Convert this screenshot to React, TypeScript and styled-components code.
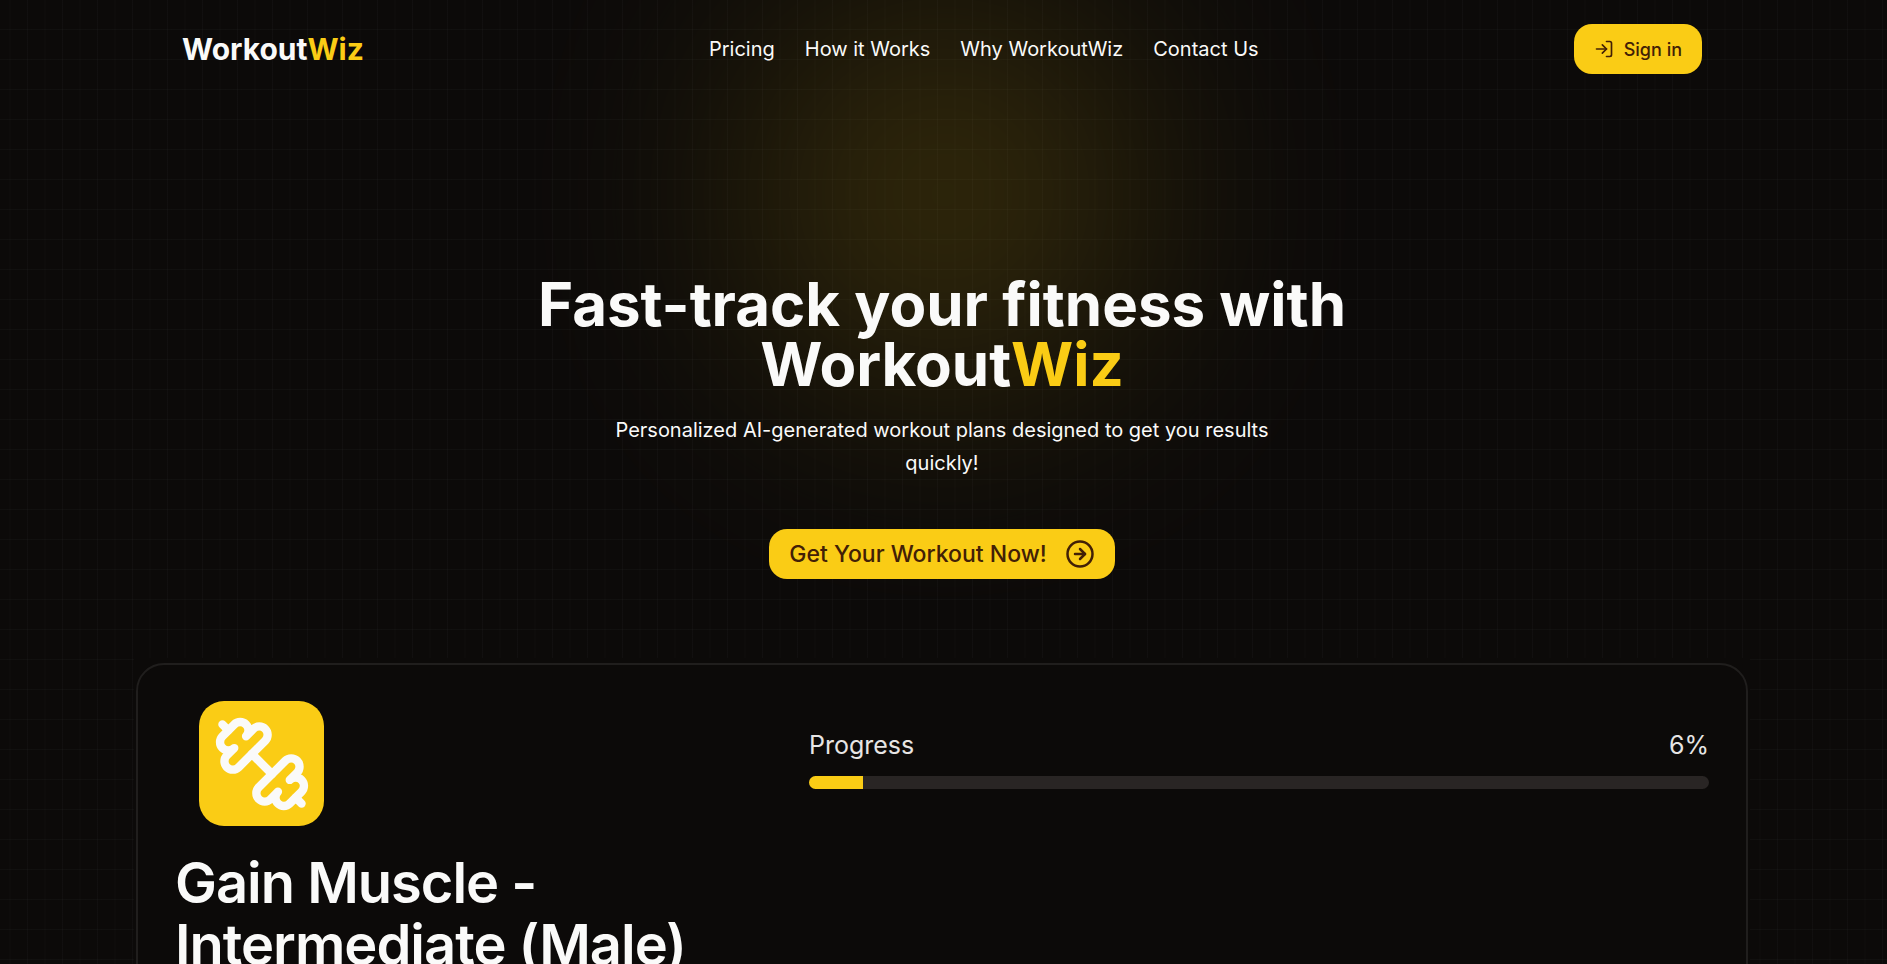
import React from "react";
import styled, { createGlobalStyle } from "styled-components";
import { CircleArrowRight, LogIn } from "lucide-react";

const color = {
  bg: "#0c0a09",
  text: "#fafaf9",
  muted: "#e7e5e4",
  primary: "#facc15",
  onPrimary: "#422006",
  track: "#292524",
  border: "#201e1d",
};

const GlobalStyle = createGlobalStyle`
  *, *::before, *::after { box-sizing: border-box; }
  html, body { margin: 0; background: ${color.bg}; }
  html { overflow: hidden; }
  body {
    color: ${color.text};
    font-family: Inter, "Liberation Sans", sans-serif;
    font-size: 20px;
    line-height: 30px;
  }
  h1, h2, p { margin: 0; }
`;

const Page = styled.div`
  position: relative;
  isolation: isolate;
  overflow: hidden;
  height: 100vh;
  padding-right: 3px;
  background-color: ${color.bg};
`;

const Grid = styled.div`
  position: absolute;
  inset: 0;
  z-index: -2;
  background-image:
    linear-gradient(to right, #8080800d 1px, transparent 1px),
    linear-gradient(to right, #80808004 2px, transparent 2px),
    linear-gradient(to bottom, #8080800c 1px, transparent 1px);
  background-size: 35px 30px;
  background-position: 27px 29px, 9px 29px, 0 29px;
`;

const Glow = styled.div`
  position: absolute;
  top: 0;
  left: 0;
  right: 0;
  z-index: -1;
  width: 388px;
  height: 388px;
  margin: 0 auto;
  border-radius: 50%;
  background: ${color.primary};
  opacity: 0.18;
  filter: blur(125px);
`;

const Header = styled.header`
  display: flex;
  align-items: center;
  justify-content: space-between;
  width: calc(100% - 364px);
  margin: 0 auto;
  padding: 24px 0;
`;

const Logo = styled.a`
  color: inherit;
  font-size: 30px;
  font-weight: 700;
  line-height: 40px;
  text-decoration: none;
`;

const Accent = styled.span`
  color: ${color.primary};
`;

const Nav = styled.nav`
  display: flex;
  gap: 30px;
  margin-left: 30px;
`;

const NavLink = styled.a`
  color: inherit;
  text-decoration: none;
`;

const Button = styled.button<{ $large?: boolean }>`
  display: inline-flex;
  align-items: center;
  gap: ${(p) => (p.$large ? 18 : 10)}px;
  height: 50px;
  padding: 0 20px;
  border: 0;
  border-radius: 18px;
  background: ${color.primary};
  color: ${color.onPrimary};
  font-family: inherit;
  font-size: ${(p) => (p.$large ? 23 : 18)}px;
  font-weight: 500;
  cursor: pointer;
`;

const Hero = styled.section`
  display: flex;
  flex-direction: column;
  align-items: center;
  padding-top: 176px;
  text-align: center;
`;

const Title = styled.h1`
  max-width: 840px;
  font-size: 60px;
  font-weight: 700;
  line-height: 60px;
`;

const Lead = styled.p`
  max-width: 700px;
  margin: 20px 0 49px;
  line-height: 33px;
`;

const Preview = styled.section`
  width: calc(100% - 268px);
  margin: 79px auto 0;
  padding: 5px 2px 0;
  background: ${color.bg};
`;

const Card = styled.article`
  display: grid;
  grid-template-columns: 595px 1fr;
  column-gap: 39px;
  height: 480px;
  padding: 36px 37px;
  border: 2px solid ${color.border};
  border-radius: 28px;
`;

const Tile = styled.div`
  display: flex;
  align-items: center;
  justify-content: center;
  width: 125px;
  height: 125px;
  margin: 0 0 26px 24px;
  border-radius: 25px;
  background: ${color.primary};
`;

const PlanTitle = styled.h2`
  font-size: 56px;
  font-weight: 600;
  line-height: 62px;
  letter-spacing: -1px;
`;

const ProgressBlock = styled.div`
  padding-top: 24px;
`;

const ProgressRow = styled.div`
  display: flex;
  justify-content: space-between;
  margin-bottom: 11px;
  color: ${color.muted};
  font-size: 25px;
  line-height: 40px;
`;

const Track = styled.div`
  overflow: hidden;
  height: 13px;
  border-radius: 7px;
  background: ${color.track};
`;

const Fill = styled.div`
  height: 100%;
  background: ${color.primary};
`;

const Dumbbell = () => (
  <svg width="100" height="100" viewBox="0 0 24 24" fill="none" stroke={color.text} strokeWidth="2" strokeLinecap="round" strokeLinejoin="round" aria-hidden="true">
    <path d="M14.4 14.4 9.6 9.6" />
    <path d="M18.657 21.485a2 2 0 1 1-2.829-2.828l-1.767 1.768a2 2 0 1 1-2.829-2.829l6.364-6.364a2 2 0 1 1 2.829 2.829l-1.768 1.767a2 2 0 1 1 2.828 2.829z" />
    <path d="m21.5 21.5-1.4-1.4" />
    <path d="M3.9 3.9 2.5 2.5" />
    <path d="M6.404 12.768a2 2 0 1 1-2.829-2.829l1.768-1.767a2 2 0 1 1-2.828-2.829l2.828-2.828a2 2 0 1 1 2.829 2.828l1.767-1.768a2 2 0 1 1 2.829 2.829z" />
  </svg>
);

const links = ["Pricing", "How it Works", "Why WorkoutWiz", "Contact Us"];
const progress = 6;

export default function App() {
  return (
    <Page>
      <GlobalStyle />
      <Grid />
      <Glow />
      <Header>
        <Logo href="#">Workout<Accent>Wiz</Accent></Logo>
        <Nav>
          {links.map((label) => (
            <NavLink key={label} href="#">{label}</NavLink>
          ))}
        </Nav>
        <Button type="button">
          <LogIn size={20} aria-hidden="true" />
          Sign in
        </Button>
      </Header>
      <main>
        <Hero>
          <Title>Fast-track your fitness with Workout<Accent>Wiz</Accent></Title>
          <Lead>Personalized AI-generated workout plans designed to get you results quickly!</Lead>
          <Button type="button" $large>
            Get Your Workout Now!
            <CircleArrowRight size={30} aria-hidden="true" />
          </Button>
        </Hero>
        <Preview>
          <Card>
            <div>
              <Tile><Dumbbell /></Tile>
              <PlanTitle>Gain Muscle - Intermediate (Male)</PlanTitle>
            </div>
            <ProgressBlock>
              <ProgressRow>
                <span id="progress-label">Progress</span>
                <span>{progress}%</span>
              </ProgressRow>
              <Track role="progressbar" aria-labelledby="progress-label" aria-valuenow={progress}>
                <Fill style={{ width: `${progress}%` }} />
              </Track>
            </ProgressBlock>
          </Card>
        </Preview>
      </main>
    </Page>
  );
}
